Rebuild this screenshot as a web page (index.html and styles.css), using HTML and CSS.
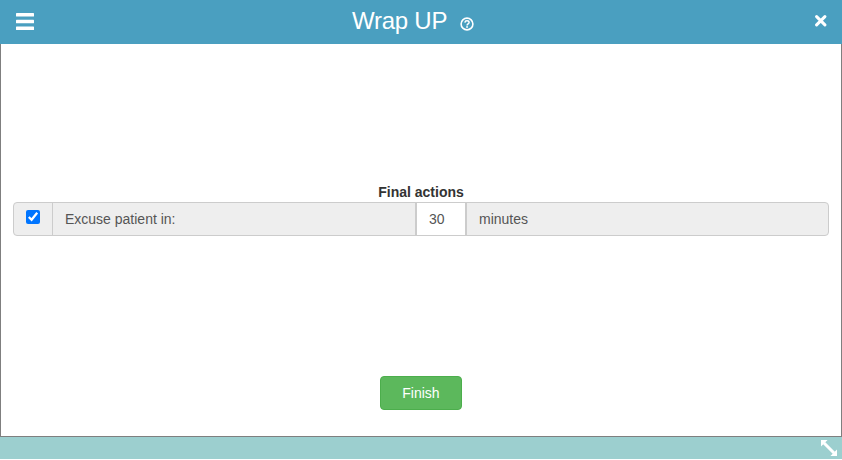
FILE: index.html
```html
<!DOCTYPE html>
<html lang="en">
<head>
<meta charset="utf-8">
<title>Wrap UP</title>
<link rel="stylesheet" href="styles.css">
</head>
<body>
<div class="window">
  <header class="titlebar">
    <svg class="menu-icon" width="18" height="17" viewBox="0 0 18 17"><rect y="0" width="18" height="3.6" rx="0.6"/><rect y="6.7" width="18" height="3.6" rx="0.6"/><rect y="13.4" width="18" height="3.6" rx="0.6"/></svg>
    <div class="title"><span>Wrap UP</span>
      <svg class="help-icon" width="14" height="14" viewBox="0 0 14 14"><circle cx="7" cy="7" r="5.9" fill="none" stroke="#fff" stroke-width="1.6"/><path d="M4.9 5.6C5 4.4 5.9 3.8 7 3.8c1.2 0 2.1.7 2.1 1.7 0 1.5-2 1.4-2 2.9" fill="none" stroke="#fff" stroke-width="1.5"/><rect x="6.2" y="9.2" width="1.7" height="1.6" fill="#fff"/></svg>
    </div>
    <svg class="close-icon" width="12" height="12" viewBox="0 0 12 12"><path d="M1.6 1.6l8.3 8.3M9.9 1.6l-8.3 8.3" stroke="#fff" stroke-width="3" stroke-linecap="round" fill="none"/></svg>
  </header>
  <main class="content">
    <div class="actions-block">
      <h2 class="section-title">Final actions</h2>
      <div class="input-group">
        <div class="cell check-cell"><input class="check" type="checkbox" checked></div>
        <div class="cell label-cell">Excuse patient in:</div>
        <input class="minutes" type="text" value="30">
        <div class="cell unit-cell">minutes</div>
      </div>
    </div>
    <button class="finish" type="button">Finish</button>
  </main>
  <footer class="statusbar">
    <svg class="resize-icon" width="16" height="16" viewBox="0 0 16 16"><path d="M3 3l10 10" stroke="#fff" stroke-width="3" fill="none"/><path d="M0 0h6.6L0 6.6zM16 16H9.4L16 9.4z" fill="#fff"/></svg>
  </footer>
</div>
</body>
</html>
```

FILE: styles.css
```css
* { box-sizing: border-box; }
html, body { margin: 0; padding: 0; background: #fff; }
body { font-family: "Liberation Sans", Arial, sans-serif; font-size: 14px; color: #555; }
.window { width: 842px; height: 459px; display: flex; flex-direction: column; }
.titlebar { height: 44px; flex: none; background: #4a9fc0; display: flex; align-items: center; justify-content: space-between; padding: 0 15px 0 16px; position: relative; }
.menu-icon { fill: #fff; margin-bottom: 1px; }
.close-icon { margin-bottom: 3px; }
.title { position: absolute; left: 352px; top: 0; height: 44px; display: flex; align-items: center; color: #fff; font-size: 24px; letter-spacing: -0.25px; white-space: nowrap; }
.title span { position: relative; top: -1px; }
.help-icon { margin-left: 13px; margin-top: 3px; }
.content { flex: 1; border: 1px solid #7f7f7f; border-top: 0; padding: 140px 12px 0; display: flex; flex-direction: column; align-items: center; }
.actions-block { width: 100%; }
.section-title { margin: 0 0 1px; height: 17px; line-height: 17px; font-size: 14px; font-weight: 700; color: #333; text-align: center; }
.input-group { display: flex; height: 34px; background: #eee; border: 1px solid #ccc; border-radius: 4px; }
.cell { display: flex; align-items: center; }
.check-cell { width: 39px; flex: none; justify-content: center; border-right: 1px solid #ccc; padding-bottom: 5px; }
.check { margin: 0; width: 14px; height: 14px; accent-color: #0075ff; }
.label-cell { flex: none; width: 362px; padding-left: 12px; padding-bottom: 1px; }
.minutes { flex: none; width: 52px; height: 32px; border: 0; border-left: 2px solid #ccc; border-right: 2px solid #ccc; background: #fff; text-align: left; font: 14px "Liberation Sans", Arial, sans-serif; color: #555; padding: 0 0 1px 12px; outline: 0; }
.unit-cell { flex: 1; padding-left: 12px; padding-bottom: 1px; }
.finish { margin-top: 140px; width: 82px; height: 34px; background: #5cb85c; border: 1px solid #4cae4c; border-radius: 4px; color: #fff; font: 14px "Liberation Sans", Arial, sans-serif; padding: 0; }
.statusbar { height: 22px; flex: none; background: #9ccfcf; display: flex; justify-content: flex-end; align-items: center; padding-right: 5px; }
```
